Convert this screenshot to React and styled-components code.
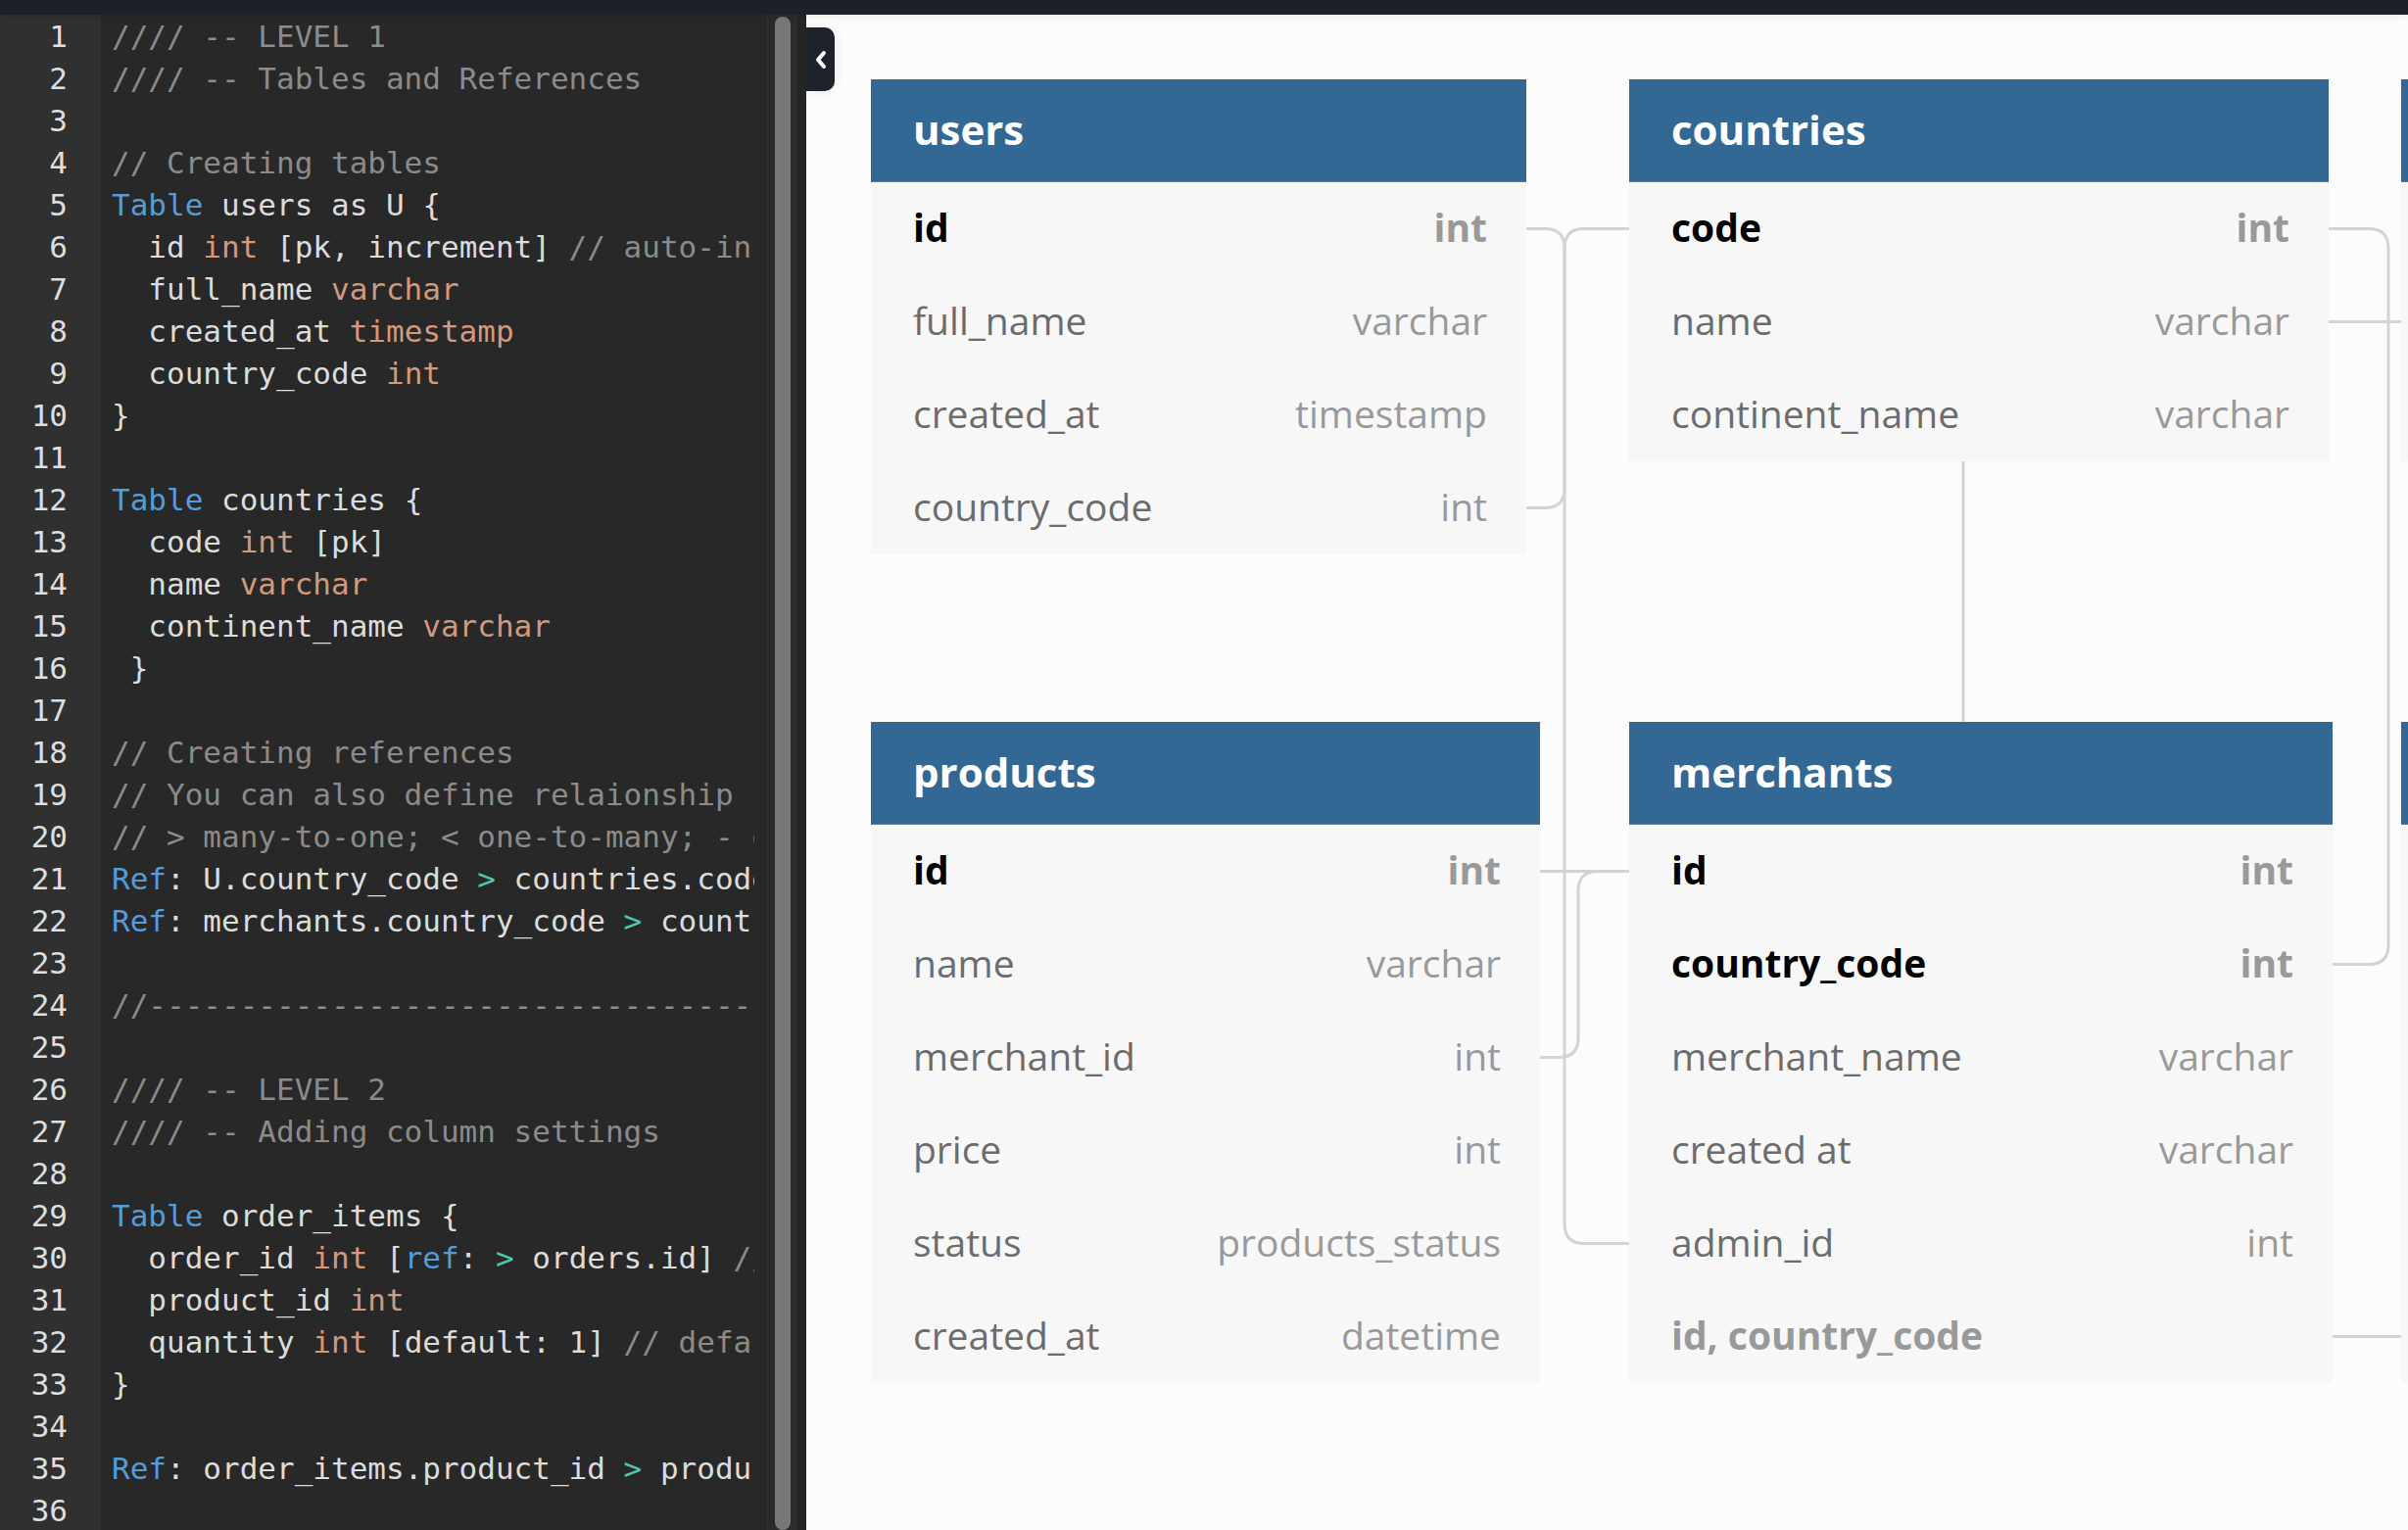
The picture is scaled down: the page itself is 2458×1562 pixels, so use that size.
import React from 'react'
import styled, { createGlobalStyle } from 'styled-components'

const GlobalStyle = createGlobalStyle`
  html, body {
    margin: 0;
    padding: 0;
    overflow: hidden;
    background: #fcfcfc;
  }
  * {
    box-sizing: border-box;
  }
`

const Page = styled.div`
  display: flex;
  flex-direction: column;
  width: 100vw;
  height: 100vh;
`

const TopBar = styled.div`
  height: 15px;
  flex: none;
  background: #1c2029;
  box-shadow: 0 2px 6px rgba(0, 0, 0, 0.08);
  position: relative;
  z-index: 2;
`

const Main = styled.div`
  flex: 1;
  display: flex;
  min-height: 0;
`

const Editor = styled.div`
  width: 823px;
  flex: none;
  display: flex;
  background: #282828;
  font-family: 'DejaVu Sans Mono', 'Liberation Mono', monospace;
  font-size: 31px;
  line-height: 43px;
  overflow: hidden;
`

const Gutter = styled.div`
  width: 103px;
  flex: none;
  background: #303030;
  color: #dedede;
  text-align: right;
  padding: 1px 34px 0 0;
`

const Code = styled.div`
  width: 667px;
  flex: none;
  padding: 1px 0 0 11px;
  overflow: hidden;
  color: #dcdcdc;
`

const Line = styled.div`
  white-space: pre;
  height: 43px;
`

const Tok = styled.span`
  color: ${p =>
    p.$t === 'kw' ? '#569cd6' : p.$t === 'ty' ? '#d19a7f' : p.$t === 'op' ? '#4ec9b0' : p.$t === 'cm' ? '#8b8b8b' : '#dcdcdc'};
`

const Track = styled.div`
  width: 30px;
  flex: none;
  margin-left: 13px;
  background: #2b2b2b;
  border-left: 1px solid #323232;
  border-right: 1px solid #323232;
  padding: 2px 0 0 7px;
`

const Thumb = styled.div`
  width: 16px;
  height: 100%;
  border-radius: 8px;
  background: #777777;
`

const Edge = styled.div`
  flex: 1;
  background: #252525;
`

const Canvas = styled.div`
  flex: 1;
  position: relative;
  overflow: hidden;
  background: #fcfcfc;
  font-family: 'Open Sans', 'Noto Sans', sans-serif;
`

const Toggle = styled.div`
  position: absolute;
  left: 0;
  top: 13px;
  width: 29px;
  height: 65px;
  background: #1d222b;
  border-radius: 0 10px 10px 0;
  box-shadow: 0 0 14px rgba(0, 0, 0, 0.08);
  display: flex;
  align-items: center;
  justify-content: center;
  z-index: 3;
`

const Links = styled.svg`
  position: absolute;
  left: 0;
  top: 0;
  width: 100%;
  height: 100%;
  overflow: visible;
`

const TableBox = styled.div`
  position: absolute;
  background: #f7f7f7;
`

const Head = styled.div`
  height: 105px;
  background: #336895;
  border-bottom: 1px solid #4c7ba6;
  color: #ffffff;
  font-weight: 700;
  font-size: 42px;
  display: flex;
  align-items: center;
  padding: 0 40px 4px 43px;
  white-space: nowrap;
`

const Row = styled.div`
  height: 95px;
  display: flex;
  align-items: center;
  justify-content: space-between;
  padding: 0 40px 5px 43px;
  font-size: 39px;
  white-space: nowrap;
`

const Name = styled.span`
  color: ${p => (p.$index ? '#999999' : p.$pk ? '#000000' : '#6c6c6c')};
  font-weight: ${p => (p.$pk || p.$index ? 700 : 400)};
`

const Type = styled.span`
  color: #999999;
  font-weight: ${p => (p.$pk ? 700 : 400)};
`

const code = [
  [['cm', '//// -- LEVEL 1']],
  [['cm', '//// -- Tables and References']],
  [],
  [['cm', '// Creating tables']],
  [['kw', 'Table'], ['', ' users as U {']],
  [['', '  id '], ['ty', 'int'], ['', ' [pk, increment] '], ['cm', '// auto-increment']],
  [['', '  full_name '], ['ty', 'varchar']],
  [['', '  created_at '], ['ty', 'timestamp']],
  [['', '  country_code '], ['ty', 'int']],
  [['', '}']],
  [],
  [['kw', 'Table'], ['', ' countries {']],
  [['', '  code '], ['ty', 'int'], ['', ' [pk]']],
  [['', '  name '], ['ty', 'varchar']],
  [['', '  continent_name '], ['ty', 'varchar']],
  [['', ' }']],
  [],
  [['cm', '// Creating references']],
  [['cm', '// You can also define relaionship separately']],
  [['cm', '// > many-to-one; < one-to-many; - one-to-one']],
  [['kw', 'Ref'], ['', ': U.country_code '], ['op', '>'], ['', ' countries.code']],
  [['kw', 'Ref'], ['', ': merchants.country_code '], ['op', '>'], ['', ' countries.code']],
  [],
  [['cm', '//----------------------------------------------']],
  [],
  [['cm', '//// -- LEVEL 2']],
  [['cm', '//// -- Adding column settings']],
  [],
  [['kw', 'Table'], ['', ' order_items {']],
  [['', '  order_id '], ['ty', 'int'], ['', ' ['], ['kw', 'ref'], ['', ': '], ['op', '>'], ['', ' orders.id] '], ['cm', '// inline relationship (many-to-one)']],
  [['', '  product_id '], ['ty', 'int']],
  [['', '  quantity '], ['ty', 'int'], ['', ' [default: 1] '], ['cm', '// default value']],
  [['', '}']],
  [],
  [['kw', 'Ref'], ['', ': order_items.product_id '], ['op', '>'], ['', ' products.id']],
  [],
]

const tables = [
  {
    name: 'users', left: 66, top: 66, width: 669,
    rows: [
      { n: 'id', t: 'int', pk: true },
      { n: 'full_name', t: 'varchar' },
      { n: 'created_at', t: 'timestamp' },
      { n: 'country_code', t: 'int' },
    ],
  },
  {
    name: 'countries', left: 840, top: 66, width: 714,
    rows: [
      { n: 'code', t: 'int', pk: true },
      { n: 'name', t: 'varchar' },
      { n: 'continent_name', t: 'varchar' },
    ],
  },
  {
    name: 'products', left: 66, top: 722, width: 683,
    rows: [
      { n: 'id', t: 'int', pk: true },
      { n: 'name', t: 'varchar' },
      { n: 'merchant_id', t: 'int' },
      { n: 'price', t: 'int' },
      { n: 'status', t: 'products_status' },
      { n: 'created_at', t: 'datetime' },
    ],
  },
  {
    name: 'merchants', left: 840, top: 722, width: 718,
    rows: [
      { n: 'id', t: 'int', pk: true },
      { n: 'country_code', t: 'int', pk: true },
      { n: 'merchant_name', t: 'varchar' },
      { n: 'created at', t: 'varchar' },
      { n: 'admin_id', t: 'int' },
      { n: 'id, country_code', t: '', index: true },
    ],
  },
  {
    name: 'order_items', left: 1628, top: 66, width: 640,
    rows: [
      { n: 'order_id', t: 'int' },
      { n: 'product_id', t: 'int' },
      { n: 'quantity', t: 'int' },
    ],
  },
  {
    name: 'orders', left: 1628, top: 722, width: 640,
    rows: [
      { n: 'id', t: 'int', pk: true },
      { n: 'user_id', t: 'int' },
      { n: 'status', t: 'varchar' },
      { n: 'created_at', t: 'varchar' },
      { n: 'merchant_id', t: 'int' },
      { n: 'country_code', t: 'int' },
    ],
  },
]

// page coordinates, shifted into the canvas (left 823, top 15)
const OX = 823
const OY = 15
const links = [
  'M1558,518.5 H1577 Q1597,518.5 1597,498.5 V253.5 Q1597,233.5 1617,233.5 H1663',
  'M1558,233.5 H1577 Q1597,233.5 1597,253.5 V1249.5 Q1597,1269.5 1617,1269.5 H1663',
  'M2381,984.5 H2418 Q2438,984.5 2438,964.5 V253.5 Q2438,233.5 2418,233.5 H2377',
  'M1572,1079.5 H1591 Q1611,1079.5 1611,1059.5 V909.5 Q1611,889.5 1631,889.5 H1663',
  'M1572,889.5 H1663',
  'M2004,471 V737',
  'M2377,328.5 H2451',
  'M2381,1364.5 H2451',
]

const Table = ({ t }) => (
  <TableBox style={{ left: t.left, top: t.top, width: t.width }}>
    <Head>{t.name}</Head>
    {t.rows.map((r, i) => (
      <Row key={i}>
        <Name $pk={r.pk} $index={r.index}>{r.n}</Name>
        <Type $pk={r.pk}>{r.t}</Type>
      </Row>
    ))}
  </TableBox>
)

export default function App() {
  return (
    <Page>
      <GlobalStyle />
      <TopBar />
      <Main>
        <Editor>
          <Gutter>
            {code.map((_, i) => (
              <Line key={i}>{i + 1}</Line>
            ))}
          </Gutter>
          <Code>
            {code.map((toks, i) => (
              <Line key={i}>
                {toks.map(([k, s], j) => (
                  <Tok key={j} $t={k}>{s}</Tok>
                ))}
              </Line>
            ))}
          </Code>
          <Track>
            <Thumb />
          </Track>
          <Edge />
        </Editor>
        <Canvas>
          <Toggle>
            <svg width="14" height="20" viewBox="0 0 14 20">
              <polyline points="10,3 4,10 10,17" fill="none" stroke="#fff" strokeWidth="4" strokeLinecap="round" strokeLinejoin="round" />
            </svg>
          </Toggle>
          <Links>
            <g transform={`translate(${-OX},${-OY})`} fill="none" stroke="#d3d3d3" strokeWidth="3">
              {links.map((d, i) => (
                <path key={i} d={d} />
              ))}
            </g>
          </Links>
          {tables.map(t => (
            <Table key={t.name} t={t} />
          ))}
        </Canvas>
      </Main>
    </Page>
  )
}
